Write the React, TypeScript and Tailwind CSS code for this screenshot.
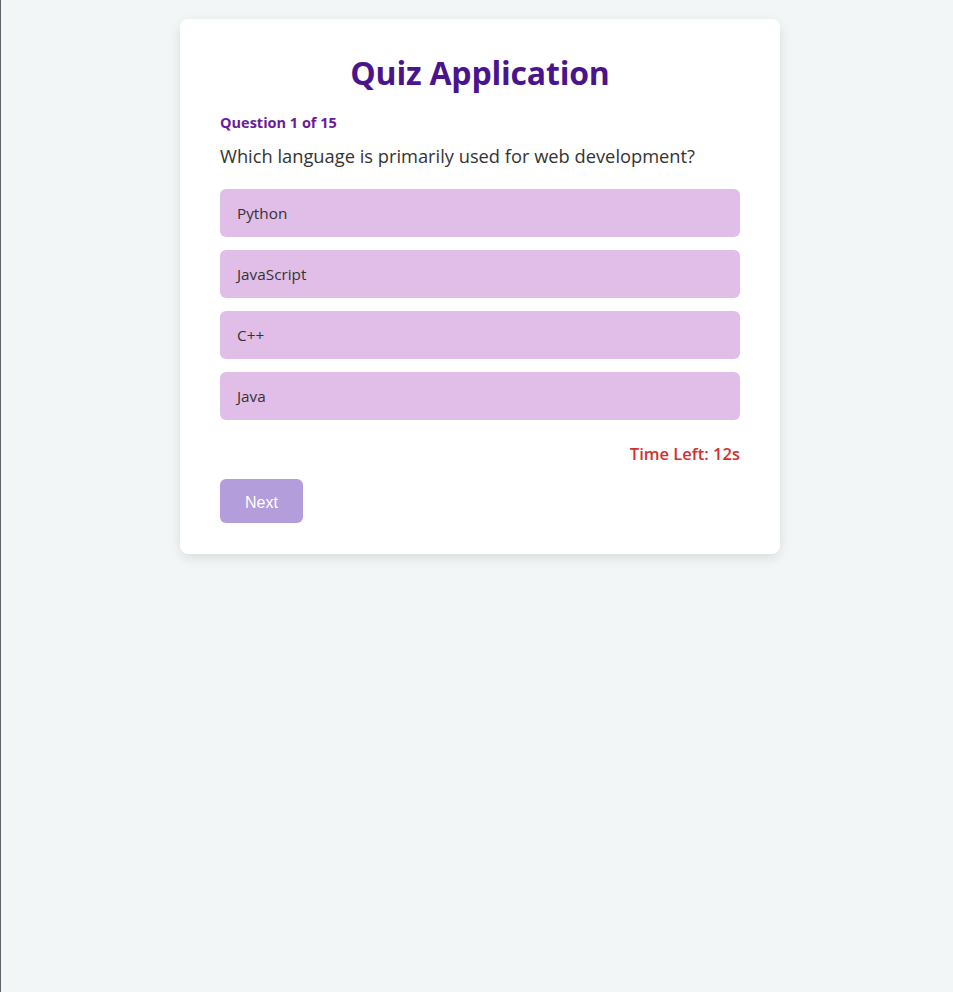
import React from "react";

export default function App() {
  const options = ["Python", "JavaScript", "C++", "Java"];
  return (
    <div
      className="min-h-screen w-full bg-[#f3f6f7] border-l border-[#5c6369] flex justify-center pl-[6px]"
      style={{ fontFamily: '"Open Sans", "Noto Sans", sans-serif' }}
    >
      <div className="mt-[19px] w-[600px] self-start bg-white rounded-[8px] shadow-[0_4px_12px_rgba(0,0,0,0.1)] px-[40px] pt-[30px] pb-[31px]">
        <h1 className="text-center text-[32px] leading-[48px] font-bold text-[#4a148c] tracking-[-0.2px]">
          Quiz Application
        </h1>
        <div className="mt-[16px] text-[14.5px] leading-[20px] font-bold text-[#6a1b9a]">
          Question 1 of 15
        </div>
        <div className="mt-[10px] text-[18.3px] leading-[26px] text-[#333333]">
          Which language is primarily used for web development?
        </div>
        <div className="mt-[20px] flex flex-col gap-[13px]">
          {options.map((o) => (
            <div
              key={o}
              className="h-[48px] rounded-[6px] bg-[#e1bee7] flex items-center pl-[17px] text-[15.3px] text-[#333333]"
            >
              {o}
            </div>
          ))}
        </div>
        <div className="mt-[22px] text-right text-[16.5px] leading-[24px] font-semibold text-[#d32f2f]">
          Time Left: 12s
        </div>
        <button
          className="mt-[13px] w-[83px] h-[44px] pt-[3px] rounded-[6px] bg-[#b39ddb] text-white text-[16px]"
          style={{ fontFamily: '"Liberation Sans", Arial, sans-serif' }}
        >
          Next
        </button>
      </div>
    </div>
  );
}
